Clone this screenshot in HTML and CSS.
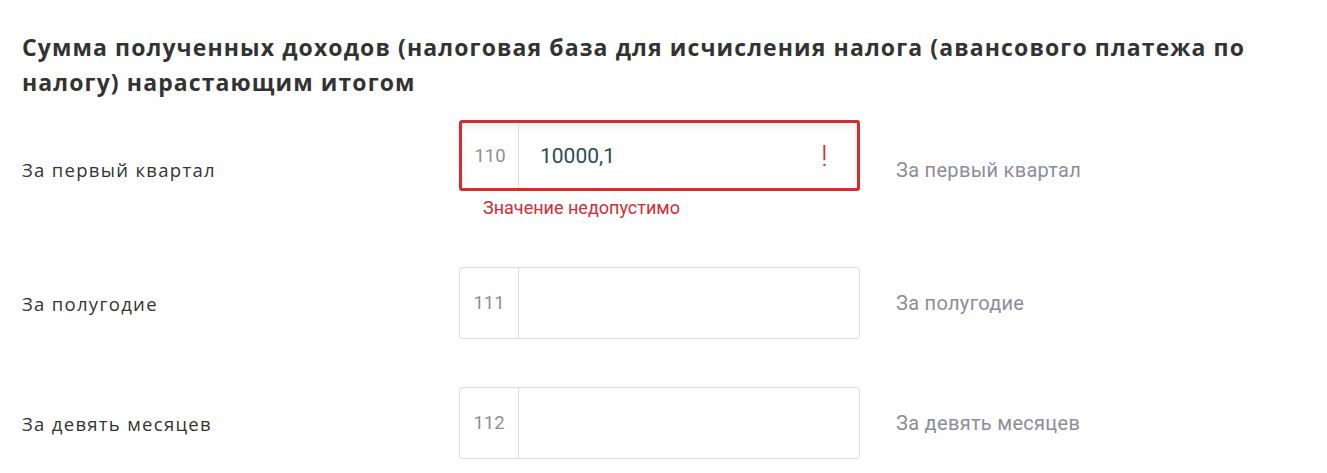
FILE: index.html
```html
<!DOCTYPE html>
<html lang="ru">

<head>
    <meta charset="UTF-8">
    <meta name="viewport" content="width=device-width, initial-scale=1.0">
    <title>Доходы</title>
    <link rel="stylesheet" href="styles.css">
</head>

<body>

    <div class="section">
        <h2 class="section-title">Сумма полученных доходов (налоговая база для исчисления налога (авансового платежа по налогу) нарастающим итогом</h2>

        <div class="rows">
            <div class="row">
                <div class="label">За первый квартал</div>
                <div class="field-wrap">
                    <div class="field field-error">
                        <span class="code">110</span>
                        <span class="value">10000,1</span>
                        <span class="mark">!</span>
                    </div>
                    <div class="error-text">Значение недопустимо</div>
                </div>
                <div class="hint">За первый квартал</div>
            </div>

            <div class="row">
                <div class="label">За полугодие</div>
                <div class="field-wrap">
                    <div class="field">
                        <span class="code">111</span>
                        <span class="value"></span>
                    </div>
                </div>
                <div class="hint">За полугодие</div>
            </div>

            <div class="row">
                <div class="label">За девять месяцев</div>
                <div class="field-wrap">
                    <div class="field">
                        <span class="code">112</span>
                        <span class="value"></span>
                    </div>
                </div>
                <div class="hint">За девять месяцев</div>
            </div>
        </div>
    </div>

</body>

</html>
```

FILE: styles.css
```css
body {
    margin: 0;
    background-color: #ffffff;
    font-family: Roboto, "Liberation Sans", sans-serif;
    color: #333333;
}

.section {
    padding: 30px 22px 0 22px;
}

.section-title {
    margin: 0 0 20px 0;
    max-width: 1260px;
    font-family: "Open Sans", sans-serif;
    font-size: 23px;
    font-weight: 700;
    line-height: 35px;
    letter-spacing: 1.1px;
    color: #333333;
}

.rows {
    display: flex;
    flex-direction: column;
    gap: 48px;
}

.row {
    display: grid;
    grid-template-columns: 401px 401px 1fr;
    column-gap: 36px;
    align-items: center;
}

.label {
    font-family: "Open Sans", sans-serif;
    font-size: 18.5px;
    letter-spacing: 1.3px;
    color: #333333;
}

.hint {
    font-size: 20px;
    letter-spacing: 0.3px;
    color: #8e8c9c;
}

.field {
    display: flex;
    align-items: center;
    height: 72px;
    border: 1px solid #dcdcdc;
    border-radius: 3px;
    box-sizing: border-box;
}

.code {
    width: 58px;
    height: 100%;
    display: flex;
    align-items: center;
    justify-content: center;
    border-right: 1px solid #dcdcdc;
    font-size: 18.5px;
    color: #8e8c9c;
}

.value {
    flex: 1;
    padding-left: 21px;
    font-size: 21px;
    color: #2c4a5a;
}

.field-error {
    height: 71px;
    border: 3px solid #d52b34;
    box-shadow: inset 0 4px 6px rgba(0, 0, 0, 0.06);
}

.field-error .code {
    width: 56px;
}

.mark {
    width: 36px;
    font-size: 30px;
    font-weight: 300;
    line-height: 1;
    color: #d52b34;
}

.error-text {
    margin-top: 6px;
    padding-left: 24px;
    font-size: 18px;
    line-height: 22px;
    color: #d52b34;
}
```
